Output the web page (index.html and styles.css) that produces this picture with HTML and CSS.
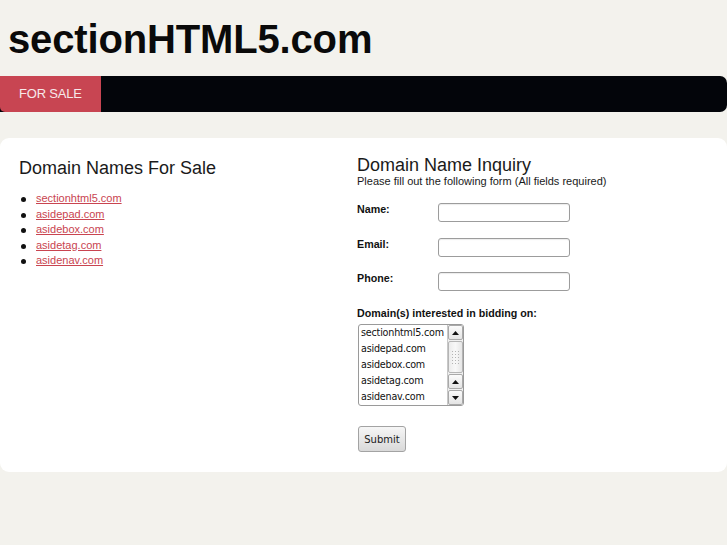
FILE: index.html
```html
<!DOCTYPE html>
<html>
<head>
<meta charset="utf-8">
<title>sectionHTML5.com</title>
<link rel="stylesheet" href="styles.css">
</head>
<body>
<header class="site-header">
  <h1 class="site-title">sectionHTML5.com</h1>
</header>
<nav class="nav-bar">
  <span class="nav-tab">FOR SALE</span>
</nav>
<main class="card">
  <section class="col-left">
    <h2 class="heading heading-left">Domain Names For Sale</h2>
    <ul class="domain-list">
      <li><a href="#">sectionhtml5.com</a></li>
      <li><a href="#">asidepad.com</a></li>
      <li><a href="#">asidebox.com</a></li>
      <li><a href="#">asidetag.com</a></li>
      <li><a href="#">asidenav.com</a></li>
    </ul>
  </section>
  <section class="col-right">
    <h2 class="heading">Domain Name Inquiry</h2>
    <p class="note">Please fill out the following form (All fields required)</p>
    <form class="inquiry">
      <div class="field"><label class="label">Name:</label><input class="text-input" type="text"></div>
      <div class="field"><label class="label">Email:</label><input class="text-input" type="text"></div>
      <div class="field"><label class="label">Phone:</label><input class="text-input" type="text"></div>
      <div class="label label-block">Domain(s) interested in bidding on:</div>
      <div class="listbox">
        <div class="options">
          <div class="option">sectionhtml5.com</div>
          <div class="option">asidepad.com</div>
          <div class="option">asidebox.com</div>
          <div class="option">asidetag.com</div>
          <div class="option">asidenav.com</div>
        </div>
        <div class="scrollbar">
          <div class="sb-btn"><svg width="7" height="4" viewBox="0 0 7 4"><polygon points="0,4 7,4 3.5,0" fill="#111"/></svg></div>
          <div class="sb-thumb"><span class="grip"></span></div>
          <div class="sb-btn"><svg width="7" height="4" viewBox="0 0 7 4"><polygon points="0,4 7,4 3.5,0" fill="#111"/></svg></div>
          <div class="sb-btn"><svg width="7" height="4" viewBox="0 0 7 4"><polygon points="0,0 7,0 3.5,4" fill="#111"/></svg></div>
        </div>
      </div>
      <button class="submit" type="button">Submit</button>
    </form>
  </section>
</main>
</body>
</html>
```

FILE: styles.css
```css
html, body {
  margin: 0;
  padding: 0;
}
body {
  background: #f3f2ed;
  font-family: "Liberation Sans", Arial, sans-serif;
  color: #1b1b1b;
}
.site-header {
  padding: 16px 8px 0;
}
.site-title {
  margin: 0;
  font-size: 40px;
  line-height: 46px;
  font-weight: bold;
  color: #0a0a0a;
  letter-spacing: -0.15px;
}
.nav-bar {
  margin-top: 14px;
  height: 36px;
  background: #03050a;
  border-radius: 0 7px 7px 0;
  display: flex;
}
.nav-tab {
  width: 101px;
  box-sizing: border-box;
  background: #c84552;
  color: #f7e9ea;
  font-size: 13px;
  line-height: 36px;
  padding-left: 19px;
  letter-spacing: -0.2px;
  border-radius: 0 0 0 5px;
}
.card {
  margin-top: 26px;
  background: #fff;
  border-radius: 9px;
  padding: 17px 0 20px 19px;
  display: grid;
  grid-template-columns: 338px 1fr;
}
.heading {
  margin: 0;
  font-size: 18px;
  line-height: 20px;
  font-weight: normal;
  color: #1a1a1a;
}
.heading-left {
  margin-top: 3px;
}
.domain-list {
  margin: 13px 0 0;
  padding-left: 17px;
  font-size: 11px;
  line-height: 15.5px;
  list-style: none;
}
.domain-list li {
  position: relative;
}
.domain-list li::before {
  content: "";
  position: absolute;
  left: -15px;
  top: 6px;
  width: 5px;
  height: 5px;
  border-radius: 50%;
  background: #111;
}
.domain-list a {
  color: #c94450;
  text-decoration: underline;
}
.note {
  margin: 0;
  font-size: 11px;
  line-height: 13px;
  color: #1a1a1a;
}
.inquiry {
  margin: 0;
}
.field {
  display: flex;
  align-items: flex-start;
  height: 19px;
  margin-top: 15.5px;
}
.field:first-child {
  margin-top: 15px;
}
.label {
  font-size: 10.7px;
  line-height: 13px;
  font-weight: bold;
  color: #111;
}
.field .label {
  width: 81px;
  padding-top: 0;
}
.text-input {
  width: 132px;
  height: 19px;
  box-sizing: border-box;
  border: 1px solid #9c9c9c;
  border-radius: 3px;
  background: #fff;
  box-shadow: inset 0 1px 1px rgba(0,0,0,0.08);
  padding: 0 3px;
  margin: 0;
  font-size: 11px;
  outline: none;
}
.label-block {
  margin-top: 16px;
}
.listbox {
  margin: 4px 0 0 1px;
  width: 106px;
  height: 82px;
  box-sizing: border-box;
  border: 1px solid #9a9a9a;
  border-radius: 3px;
  display: flex;
  background: #fff;
  overflow: hidden;
}
.options {
  flex: 1;
  padding: 0 0 0 2px;
}
.option {
  font-family: "DejaVu Sans", sans-serif;
  font-size: 9.6px;
  line-height: 16px;
  color: #111;
  white-space: nowrap;
  letter-spacing: -0.2px;
}
.scrollbar {
  width: 15px;
  display: flex;
  flex-direction: column;
  border-left: 1px solid #c8c8c8;
  background: #f0f0f0;
}
.sb-btn {
  height: 15px;
  box-sizing: border-box;
  border: 1px solid #a9a9a9;
  border-radius: 2px;
  background: linear-gradient(#fbfbfb, #e4e4e4);
  display: flex;
  align-items: center;
  justify-content: center;
}
.sb-btn + .sb-btn {
  margin-top: 1px;
}
.sb-thumb {
  flex: 1;
  box-sizing: border-box;
  border: 1px solid #b5b5b5;
  border-radius: 2px;
  background: linear-gradient(90deg, #ececec, #f8f8f8, #e6e6e6);
  display: flex;
  align-items: center;
  justify-content: center;
  margin: 1px 0;
}
.grip {
  width: 9px;
  height: 14px;
  background-image: radial-gradient(circle, #b4b4b4 0.6px, transparent 0.8px);
  background-size: 3px 3px;
}
.submit {
  display: block;
  margin: 20px 0 0 1px;
  width: 48px;
  height: 26px;
  box-sizing: border-box;
  border: 1px solid #a3a3a3;
  border-radius: 3px;
  background: linear-gradient(#f6f6f6, #d9d9d9);
  font-family: "DejaVu Sans", sans-serif;
  font-size: 10px;
  color: #1a1a1a;
  padding: 0;
}
```
